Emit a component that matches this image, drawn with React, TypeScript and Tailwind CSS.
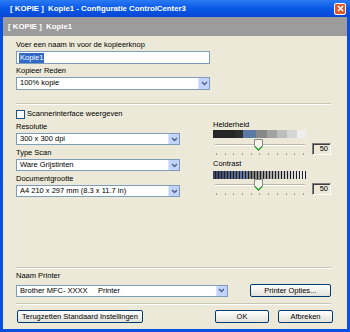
import React from "react";

const font = { fontFamily: '"Liberation Sans", Arial, sans-serif' };

function Arrow() {
  return (
    <div className="w-[11px] h-full bg-[#c3d3fd] border-l border-[#dbe5fd] flex items-center justify-center">
      <svg width="7" height="5" viewBox="0 0 7 5">
        <path d="M1 1 L3.5 3.5 L6 1" stroke="#4d6185" strokeWidth="1.4" fill="none" />
      </svg>
    </div>
  );
}

function Select({ value, className = "" }: { value: string; className?: string }) {
  return (
    <div className={`h-[12px] border border-[#7f9db9] bg-white flex items-stretch ${className}`}>
      <div className="flex-1 pl-[3px] text-[7.5px] leading-[10px] text-black whitespace-pre">{value}</div>
      <Arrow />
    </div>
  );
}

function Label({ children, className = "" }: { children: React.ReactNode; className?: string }) {
  return <div className={`h-[10px] text-[7.5px] leading-[10px] text-black ${className}`}>{children}</div>;
}

function Sep({ className = "" }: { className?: string }) {
  return <div className={`h-[2px] border-t border-[#c9c6b8] border-b border-b-white ${className}`} />;
}

function Btn({ children, className = "" }: { children: React.ReactNode; className?: string }) {
  return (
    <div
      className={`h-[13px] rounded-[2px] border border-[#003c74] bg-gradient-to-b from-white to-[#e3e2da] flex items-center justify-center text-[7.5px] leading-[10px] text-black ${className}`}
    >
      {children}
    </div>
  );
}

function Thumb() {
  return (
    <svg width="9" height="12" viewBox="0 0 9 12" className="absolute top-[-1px] left-[41px]">
      <path d="M0.5 0.5 H8.5 V7.5 L4.5 11.5 L0.5 7.5 Z" fill="#f4f3ee" stroke="#8a8a80" />
      <path d="M1 7.5 L4.5 11 L8 7.5" fill="none" stroke="#21a121" strokeWidth="1.2" />
    </svg>
  );
}

function Slider() {
  const ticks = Array.from({ length: 11 }, (_, i) => i);
  return (
    <div className="relative w-[93px] h-[17px]">
      <div className="absolute left-[2px] right-0 top-[4px] h-[2px] border-t border-[#b9b7a9] border-b border-b-white" />
      <Thumb />
      <div className="absolute left-[3px] right-[1px] top-[13px] flex justify-between">
        {ticks.map((t) => (
          <div key={t} className="w-px h-[2px] bg-[#a3a08f]" />
        ))}
      </div>
    </div>
  );
}

function ValueBox() {
  return (
    <div className="w-[19px] h-[12px] border-t border-l border-[#808080] border-b border-r border-b-white border-r-white shadow-[inset_1px_1px_0_#404040] flex items-center justify-end pr-[2px] text-[7.5px] leading-[10px] text-black">
      50
    </div>
  );
}

export default function App() {
  const bright = ["#262626", "#262626", "#2e2e2e", "#5a7aa6", "#888888", "#a2a2a2", "#bdbdbd", "#d6d6d6", "#efefef"];
  const brightW = [14, 8, 8, 13, 11, 10, 10, 10, 9];
  const stripes = Array.from({ length: 31 }, (_, i) => i);
  return (
    <div className="w-[350px] h-[332px] bg-[#0a4fe0] flex flex-col overflow-hidden" style={font}>
      <div className="h-[17px] flex items-center bg-gradient-to-b from-[#2a7af5] via-[#0858e6] to-[#0647d4]">
        <div className="pl-[10px] flex-1 text-white font-bold text-[7.8px] leading-[10px] whitespace-pre">
          [ KOPIE ]  Kopie1 - Configuratie ControlCenter3
        </div>
        <div className="w-[12px] h-[12px] mr-[4px] rounded-[2px] border border-white bg-[#e2582d] flex items-center justify-center">
          <svg width="7" height="7" viewBox="0 0 7 7">
            <path d="M1 1 L6 6 M6 1 L1 6" stroke="white" strokeWidth="1.6" />
          </svg>
        </div>
      </div>
      <div className="flex-1 mx-[3px] mb-[3px] bg-[#ece9d8] flex flex-col">
        <div className="h-[19px] bg-[#9c9c9c] flex items-center pl-[5px] text-white font-bold text-[7.8px] leading-[10px] whitespace-pre">
          [ KOPIE ]  Kopie1
        </div>
        <div className="flex-1 flex flex-col pl-[13px] pr-[16px] pt-[4px] pb-[6px]">
          <Label>Voer een naam in voor de kopieerknop</Label>
          <div className="mt-[1px] w-[194px] h-[13px] border border-[#7f9db9] bg-white flex items-center pl-[2px]">
            <span className="bg-[#316ac5] text-white text-[7.5px] leading-[10px] px-[1px]">Kopie1</span>
          </div>
          <Label className="mt-[2px]">Kopieer Reden</Label>
          <Select value="100% kopie" className="mt-[1px] w-[194px] h-[13px]" />
          <Sep className="mt-[13px]" />
          <div className="mt-[4px] h-[10px] flex items-center gap-[2px]">
            <div className="w-[9px] h-[9px] border border-[#1c5180] bg-white" />
            <span className="text-[7.5px] leading-[10px] text-black">Scannerinterface weergeven</span>
          </div>
          <div className="mt-[1px] flex">
            <div className="w-[164px] pt-[2px] flex flex-col">
              <Label>Resolutie</Label>
              <Select value="300 x 300 dpi" className="mt-[1px]" />
              <Label className="mt-[3px]">Type Scan</Label>
              <Select value="Ware Grijstinten" className="mt-[1px]" />
              <Label className="mt-[3px]">Documentgrootte</Label>
              <Select value="A4 210 x 297 mm (8.3 x 11.7 in)" className="mt-[1px]" />
            </div>
            <div className="ml-[33px] flex flex-col w-[118px]">
              <Label>Helderheid</Label>
              <div className="h-[8px] w-[93px] flex">
                {bright.map((c, i) => (
                  <div key={i} className="h-full" style={{ background: c, width: brightW[i] }} />
                ))}
              </div>
              <div className="mt-[2px] flex items-start">
                <Slider />
                <div className="ml-[7px] mt-[3px]">
                  <ValueBox />
                </div>
              </div>
              <Label className="mt-[2px]">Contrast</Label>
              <div className="mt-[2px] h-[8px] w-[93px] flex bg-[#1e1e1e]">
                {stripes.map((i) => {
                  const t = i / 30;
                  const light = Math.round(40 + t * 200);
                  const col = i < 12 ? `rgb(${60 + i * 4},${70 + i * 5},${100 + i * 6})` : `rgb(${light},${light},${light})`;
                  return <div key={i} className="w-[3px] h-full border-r border-[#1e1e1e]" style={{ background: col }} />;
                })}
              </div>
              <div className="mt-[1px] flex items-start">
                <Slider />
                <div className="ml-[7px] mt-[3px]">
                  <ValueBox />
                </div>
              </div>
            </div>
          </div>
          <div className="flex-1" />
          <Sep />
          <Label className="mt-[2px]">Naam Printer</Label>
          <div className="mt-[3px] flex items-center">
            <Select value="Brother MFC- XXXX     Printer" className="w-[213px]" />
            <Btn className="ml-[22px] w-[82px]">Printer Opties...</Btn>
          </div>
          <Sep className="mt-[6px]" />
          <div className="mt-[5px] flex items-center">
            <Btn className="ml-[1px] w-[126px]">Terugzetten Standaard Instellingen</Btn>
            <div className="flex-1" />
            <Btn className="w-[54px]">OK</Btn>
            <Btn className="ml-[9px] w-[55px] mr-[-2px]">Afbreken</Btn>
          </div>
        </div>
      </div>
    </div>
  );
}
